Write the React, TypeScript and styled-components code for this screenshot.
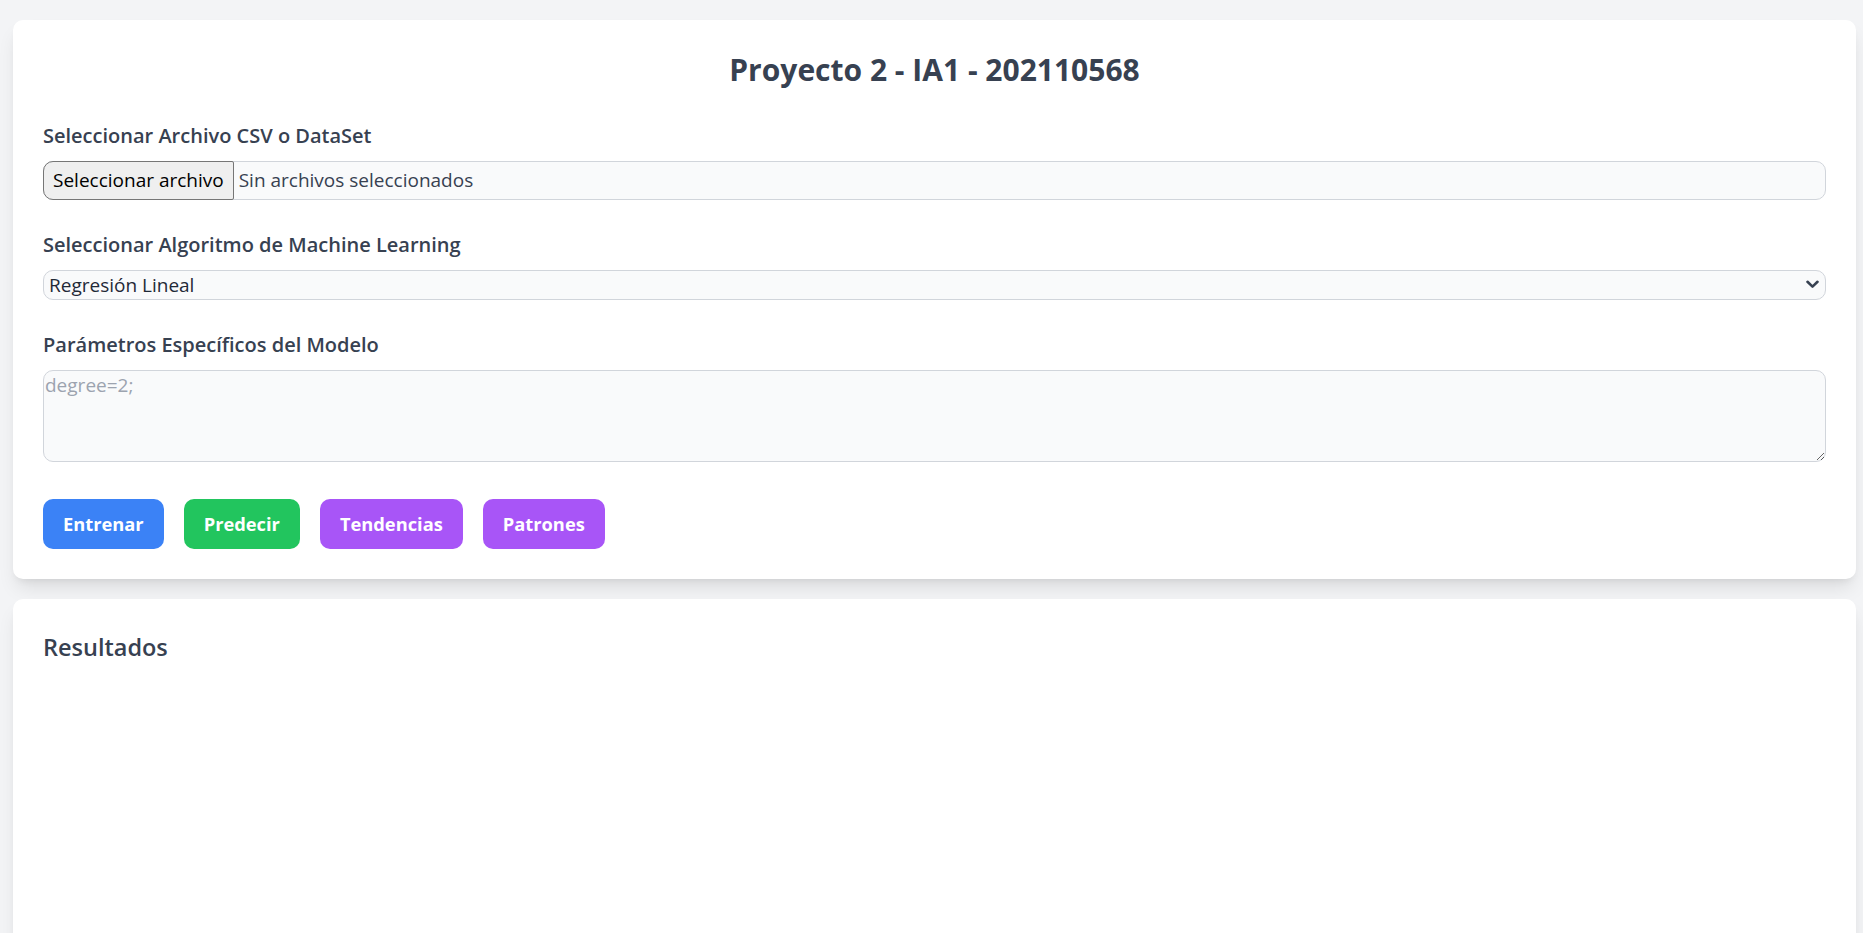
import React from "react";
import styled, { createGlobalStyle } from "styled-components";

const GlobalStyle = createGlobalStyle`
  html, body {
    margin: 0;
    padding: 0;
    background: #f3f4f6;
  }
  body {
    font-family: "Open Sans", "Noto Sans", Arial, sans-serif;
    color: #374151;
  }
  * { box-sizing: border-box; }
`;

const Page = styled.div`
  display: flex;
  flex-direction: column;
  gap: 20px;
  padding: 20px 7px 0 13px;
`;

const Card = styled.section<{ $minHeight?: number }>`
  background: #ffffff;
  border-radius: 10px;
  padding: 30px;
  box-shadow: 0 12px 19px -4px rgba(0, 0, 0, 0.1), 0 5px 8px -5px rgba(0, 0, 0, 0.1);
  min-height: ${(p) => (p.$minHeight ? `${p.$minHeight}px` : "auto")};
`;

const Title = styled.h1`
  margin: 0 0 30px;
  font-size: 30px;
  line-height: 40.5px;
  font-weight: 700;
  text-align: center;
  color: #374151;
`;

const Field = styled.div<{ $gap: number }>`
  margin-bottom: ${(p) => p.$gap}px;
`;

const Label = styled.label`
  display: block;
  font-size: 20px;
  line-height: 30px;
  font-weight: 600;
  color: #374151;
  margin-bottom: 10px;
`;

const FileBox = styled.div`
  display: flex;
  align-items: center;
  height: 39px;
  border: 1px solid #d1d5db;
  border-radius: 10px;
  background: #f9fafb;
  font-size: 19px;
  color: #374151;
`;

const FileButton = styled.span`
  display: flex;
  align-items: center;
  align-self: stretch;
  margin: -1px 5px -1px -1px;
  padding: 0 9px;
  background: #efefef;
  border: 1px solid #767676;
  border-radius: 10px 2px 2px 10px;
  color: #000000;
  font-size: 19px;
`;

const SelectBox = styled.div`
  display: flex;
  align-items: center;
  justify-content: space-between;
  height: 30px;
  padding: 0 6px 0 5px;
  border: 1px solid #d1d5db;
  border-radius: 10px;
  background: #f9fafb;
  font-size: 19px;
  color: #1f2937;
`;

const TextArea = styled.textarea`
  display: block;
  width: 100%;
  height: 92px;
  padding: 2px 1px;
  border: 1px solid #d1d5db;
  border-radius: 10px;
  background: #f9fafb;
  font-family: inherit;
  font-size: 19px;
  line-height: 1.35;
  color: #374151;
  outline: none;
  &::placeholder {
    color: #9ca3af;
  }
`;

const ButtonRow = styled.div`
  display: flex;
  gap: 20px;
`;

const ActionButton = styled.button<{ $color: string }>`
  height: 50px;
  padding: 0 20px;
  border: none;
  border-radius: 10px;
  background: ${(p) => p.$color};
  color: #ffffff;
  font-family: inherit;
  font-size: 18.3px;
  font-weight: 700;
  cursor: pointer;
`;

const SectionTitle = styled.h2`
  margin: 0;
  font-size: 23.5px;
  line-height: 36px;
  font-weight: 600;
  color: #374151;
`;

const Chevron = () => (
  <svg width="13" height="9" viewBox="0 0 13 9" fill="none">
    <path d="M1.5 1.8 L6.5 6.6 L11.5 1.8" stroke="#374151" strokeWidth="2.6" strokeLinecap="round" strokeLinejoin="round" />
  </svg>
);

export default function App() {
  return (
    <>
      <GlobalStyle />
      <Page>
        <Card>
          <Title>Proyecto 2 - IA1 - 202110568</Title>
          <Field $gap={30}>
            <Label>Seleccionar Archivo CSV o DataSet</Label>
            <FileBox>
              <FileButton>Seleccionar archivo</FileButton>
              Sin archivos seleccionados
            </FileBox>
          </Field>
          <Field $gap={30}>
            <Label>Seleccionar Algoritmo de Machine Learning</Label>
            <SelectBox>
              <span>Regresión Lineal</span>
              <Chevron />
            </SelectBox>
          </Field>
          <Field $gap={37}>
            <Label>Parámetros Específicos del Modelo</Label>
            <TextArea placeholder="degree=2;" />
          </Field>
          <ButtonRow>
            <ActionButton $color="#3b82f6">Entrenar</ActionButton>
            <ActionButton $color="#22c55e">Predecir</ActionButton>
            <ActionButton $color="#a855f7">Tendencias</ActionButton>
            <ActionButton $color="#a855f7">Patrones</ActionButton>
          </ButtonRow>
        </Card>
        <Card $minHeight={420}>
          <SectionTitle>Resultados</SectionTitle>
        </Card>
      </Page>
    </>
  );
}
